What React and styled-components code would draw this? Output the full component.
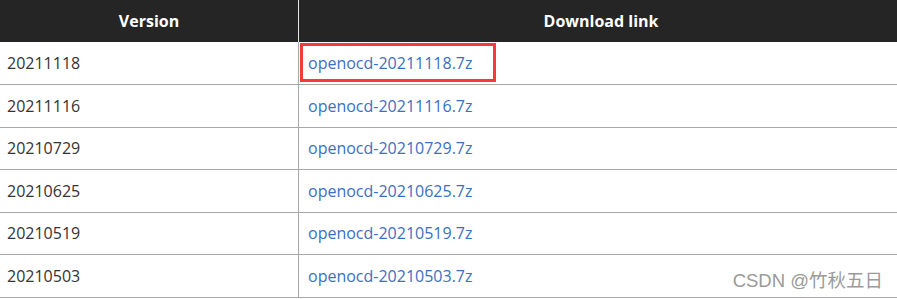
import React from 'react'
import styled, { createGlobalStyle } from 'styled-components'

const GlobalStyle = createGlobalStyle`
  body {
    margin: 0;
    background: #fff;
    font-family: "Open Sans", "Noto Sans", sans-serif;
    font-size: 16px;
  }
`

const releases = [
  '20211118',
  '20211116',
  '20210729',
  '20210625',
  '20210519',
  '20210503',
]

const Page = styled.div`
  position: relative;
  width: 897px;
  height: 299px;
  overflow: hidden;
`

const Table = styled.table`
  width: 903px;
  border-collapse: collapse;
  table-layout: fixed;
`

const HeadCell = styled.th`
  height: 42px;
  padding: 0;
  background: #252525;
  color: #fff;
  font-weight: 700;
  font-size: 16px;
  text-align: center;
  width: ${props => props.width || 'auto'};
  border-left: ${props => props.divided ? '1px solid #e6e6e6' : 'none'};
`

const Row = styled.tr`
  height: 42.5px;
  border-bottom: 1px solid #a8a8a8;
`

const Cell = styled.td`
  padding: 0 0 0 ${props => props.divided ? '9px' : '7px'};
  color: #333;
  border-left: ${props => props.divided ? '1px solid #a8a8a8' : 'none'};
`

const Link = styled.a`
  position: relative;
  color: #3b6fc4;
  text-decoration: none;
`

const Highlight = styled.span`
  position: absolute;
  left: -8px;
  right: -24px;
  top: -9px;
  bottom: -8px;
  border: 3px solid #f63a3a;
  pointer-events: none;
`

const Watermark = styled.div`
  position: absolute;
  right: 14px;
  bottom: 7px;
  font-family: "Liberation Sans", "Noto Sans CJK SC", sans-serif;
  font-size: 18.5px;
  color: #9a9a9a;
  text-shadow: 1px 1px 0 #fff;
`

export default function App() {
  return (
    <Page>
      <GlobalStyle />
      <Table>
        <thead>
          <tr>
            <HeadCell width="298px">Version</HeadCell>
            <HeadCell divided>Download link</HeadCell>
          </tr>
        </thead>
        <tbody>
          {releases.map((v, i) => (
            <Row key={v}>
              <Cell>{v}</Cell>
              <Cell divided>
                <Link href="#">
                  openocd-{v}.7z
                  {i === 0 && <Highlight />}
                </Link>
              </Cell>
            </Row>
          ))}
        </tbody>
      </Table>
      <Watermark>CSDN @竹秋五日</Watermark>
    </Page>
  )
}
